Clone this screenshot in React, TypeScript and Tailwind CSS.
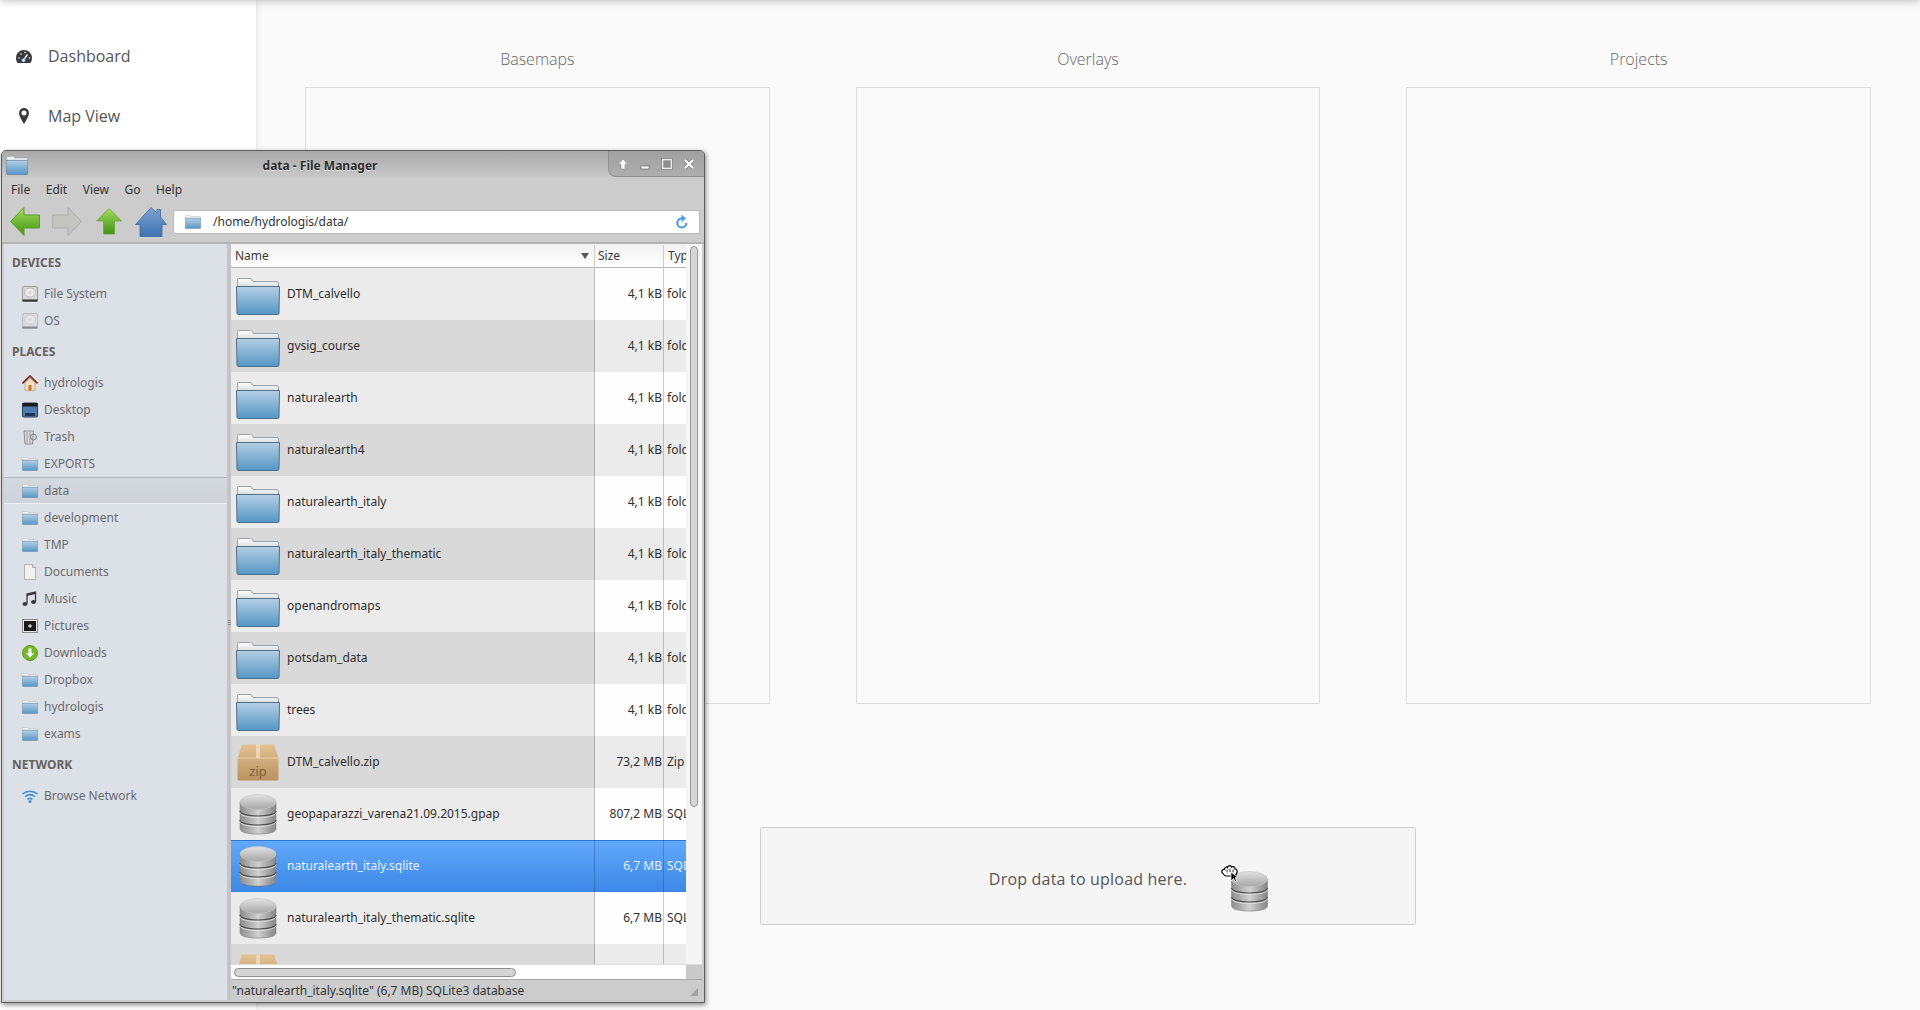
import React from 'react';

const SHARED_DEFS = (
  <svg className="absolute h-0 w-0">
    <defs>
      <linearGradient id="folderBody" x1="0" y1="0" x2="0" y2="1">
        <stop offset="0" stopColor="#b4cfe3" />
        <stop offset="1" stopColor="#5596c6" />
      </linearGradient>
      <linearGradient id="folderTab" x1="0" y1="0" x2="0" y2="1">
        <stop offset="0" stopColor="#ffffff" />
        <stop offset="1" stopColor="#d5d9dd" />
      </linearGradient>
      <linearGradient id="dbSide" x1="0" y1="0" x2="1" y2="0">
        <stop offset="0" stopColor="#8c8c8c" />
        <stop offset="0.5" stopColor="#d0d0d0" />
        <stop offset="1" stopColor="#858585" />
      </linearGradient>
      <linearGradient id="dbTop" x1="0" y1="0" x2="0" y2="1">
        <stop offset="0" stopColor="#e2e2e2" />
        <stop offset="1" stopColor="#a6a6a6" />
      </linearGradient>
      <linearGradient id="zipBody" x1="0" y1="0" x2="0" y2="1">
        <stop offset="0" stopColor="#e2c193" />
        <stop offset="1" stopColor="#b8925f" />
      </linearGradient>
      <linearGradient id="greenArrow" x1="0" y1="0" x2="0" y2="1">
        <stop offset="0" stopColor="#a5dc5e" />
        <stop offset="1" stopColor="#3f9410" />
      </linearGradient>
      <linearGradient id="homeBlue" x1="0" y1="0" x2="0" y2="1">
        <stop offset="0" stopColor="#7ba3d3" />
        <stop offset="1" stopColor="#3f72b1" />
      </linearGradient>
    </defs>
  </svg>
);

const FolderIcon = ({ className }: { className: string }) => (
  <svg viewBox="0 0 44 37" className={className}>
    <path d="M1.500 9V1.500q0-1 1-1h12q1 0 1.500 1l1 2h24q1.500 0 1.500 1.500V10z" fill="url(#folderTab)" stroke="#9aa3aa" strokeWidth="1" />
    <path d="M0.500 8.500h43L43 35q0 1.500-1.500 1.500h-39Q1 36.500 1 35z" fill="url(#folderBody)" stroke="#4f6f88" strokeWidth="1" />
  </svg>
);

const DatabaseIcon = ({ className }: { className: string }) => (
  <svg viewBox="0 0 38 41" className={className}>
    <ellipse cx="19" cy="37" rx="17" ry="3.500" fill="#000" opacity="0.15" />
    <path d="M1 8v27c0 3 8 5 18 5s18-2 18-5V8z" fill="url(#dbSide)" stroke="#888" strokeWidth="0.6" />
    <path d="M1 17c0 3 8 5 18 5s18-2 18-5M1 26c0 3 8 5 18 5s18-2 18-5" fill="none" stroke="#4d4d4d" strokeWidth="1.200" />
    <path d="M1 18.500c0 3 8 5 18 5s18-2 18-5M1 27.500c0 3 8 5 18 5s18-2 18-5" fill="none" stroke="#e6e6e6" strokeWidth="0.8" />
    <ellipse cx="19" cy="8" rx="18" ry="7.500" fill="url(#dbTop)" stroke="#c4c4c4" strokeWidth="0.6" />
  </svg>
);

const ZipIcon = ({ className, showLabel = true }: { className: string; showLabel?: boolean }) => (
  <svg viewBox="0 0 42 37" className={className}>
    <path d="M0.500 14L5 0.500h32L41.500 14v21q0 1.500-1.500 1.500H2q-1.500 0-1.500-1.500z" fill="url(#zipBody)" />
    <path d="M0.500 14h41" stroke="#efdcbd" strokeWidth="0.8" />
    <path d="M19 0.500h4V14h-4z" fill="#f1e2c9" opacity="0.7" />
    {showLabel && (
      <text x="21" y="32" textAnchor="middle" fontSize="13" fill="#7e6240" fontFamily="Noto Sans, sans-serif">zip</text>
    )}
  </svg>
);

const DiskIcon = ({ dim }: { dim?: boolean }) => (
  <svg viewBox="0 0 16 16" className={`h-4 w-4 ${dim ? 'opacity-50' : ''}`}>
    <rect x="0.500" y="0.500" width="15" height="15" rx="1.500" fill="#d8d8d8" stroke="#9a9a9a" />
    <ellipse cx="8" cy="6.500" rx="5.500" ry="4.500" fill="#ececec" stroke="#a8a8a8" strokeWidth="0.7" />
    <circle cx="8" cy="6.500" r="1.500" fill="#d2d2d2" />
    <rect x="0.500" y="13.500" width="15" height="2" fill="#333" />
  </svg>
);

const HouseIcon = () => (
  <svg viewBox="0 0 16 16" className="h-4 w-4">
    <path d="M3 8v7.500h10V8L8 3z" fill="#f3dfc4" stroke="#b08d64" strokeWidth="0.6" />
    <path d="M0.500 8.500L8 1l7.500 7.500" fill="none" stroke="#7a1f1a" strokeWidth="1.600" />
    <rect x="6.500" y="10" width="3" height="5.500" fill="#c5742b" />
  </svg>
);

const DesktopIcon = () => (
  <svg viewBox="0 0 16 16" className="h-4 w-4">
    <rect x="0.500" y="1" width="15" height="14" rx="1" fill="#4f7cab" stroke="#28405c" />
    <rect x="0.500" y="1" width="15" height="3.500" fill="#1b1b1b" />
    <rect x="3" y="11" width="10" height="3" fill="#1f3650" />
  </svg>
);

const TrashIcon = () => (
  <svg viewBox="0 0 16 16" className="h-4 w-4">
    <path d="M2 2l1 13h7.500l1-13z" fill="#d9dde1" stroke="#777" strokeWidth="0.8" />
    <path d="M5 3v11M8 3v11" stroke="#888" strokeWidth="0.8" />
    <circle cx="11.500" cy="8" r="3" fill="none" stroke="#777" strokeWidth="0.9" />
  </svg>
);

const DocumentIcon = () => (
  <svg viewBox="0 0 16 16" className="h-4 w-4">
    <path d="M2.500 0.500h8l3 3v12h-11z" fill="#f1f1f1" stroke="#a5a5a5" strokeWidth="0.8" />
    <path d="M10.500 0.500v3h3" fill="#d8d8d8" stroke="#a5a5a5" strokeWidth="0.8" />
  </svg>
);

const MusicIcon = () => (
  <svg viewBox="0 0 16 16" className="h-4 w-4">
    <path d="M5 12.500V3l8.500-2v9.500" fill="none" stroke="#3a3a3a" strokeWidth="1.300" />
    <path d="M5 3l8.500-2v2L5 5z" fill="#3a3a3a" />
    <ellipse cx="3" cy="13" rx="2.500" ry="2" fill="#3a3a3a" />
    <ellipse cx="11.500" cy="11" rx="2.500" ry="2" fill="#3a3a3a" />
  </svg>
);

const PicturesIcon = () => (
  <svg viewBox="0 0 16 16" className="h-4 w-4">
    <rect x="0.500" y="1.500" width="15" height="13" fill="#e8e8e8" stroke="#8c8c8c" />
    <rect x="2" y="3" width="12" height="10" fill="#1a1a1a" />
    <circle cx="8" cy="8" r="1.800" fill="#c9c9c9" />
  </svg>
);

const DownloadIcon = () => (
  <svg viewBox="0 0 16 16" className="h-4 w-4">
    <circle cx="8" cy="8" r="7.500" fill="#76b82a" stroke="#5c9a1c" />
    <path d="M6.500 3.500h3V8H12l-4 4.500L4 8h2.500z" fill="#fff" />
  </svg>
);

const WifiIcon = () => (
  <svg viewBox="0 0 16 16" className="h-4 w-4">
    <path d="M0.500 6c4.200-3.800 10.800-3.800 15 0M3 8.800c3-2.600 7-2.600 10 0M5.500 11.300c1.600-1.200 3.400-1.200 5 0" fill="none" stroke="#3f8fd0" strokeWidth="1.500" />
    <circle cx="8" cy="13.500" r="1.500" fill="#3f8fd0" />
  </svg>
);

const SmallFolder = () => <FolderIcon className="h-[14px] w-4" />;

const deviceRows = [
  { label: 'File System', icon: <DiskIcon /> },
  { label: 'OS', icon: <DiskIcon dim /> },
];

const placeRows = [
  { label: 'hydrologis', icon: <HouseIcon /> },
  { label: 'Desktop', icon: <DesktopIcon /> },
  { label: 'Trash', icon: <TrashIcon /> },
  { label: 'EXPORTS', icon: <SmallFolder /> },
  { label: 'data', icon: <SmallFolder />, active: true },
  { label: 'development', icon: <SmallFolder /> },
  { label: 'TMP', icon: <SmallFolder /> },
  { label: 'Documents', icon: <DocumentIcon /> },
  { label: 'Music', icon: <MusicIcon /> },
  { label: 'Pictures', icon: <PicturesIcon /> },
  { label: 'Downloads', icon: <DownloadIcon /> },
  { label: 'Dropbox', icon: <SmallFolder /> },
  { label: 'hydrologis', icon: <SmallFolder /> },
  { label: 'exams', icon: <SmallFolder /> },
];

type FileKind = 'folder' | 'zip' | 'db';

const files: { name: string; size: string; type: string; kind: FileKind; selected?: boolean }[] = [
  { name: 'DTM_calvello', size: '4,1 kB', type: 'folder', kind: 'folder' },
  { name: 'gvsig_course', size: '4,1 kB', type: 'folder', kind: 'folder' },
  { name: 'naturalearth', size: '4,1 kB', type: 'folder', kind: 'folder' },
  { name: 'naturalearth4', size: '4,1 kB', type: 'folder', kind: 'folder' },
  { name: 'naturalearth_italy', size: '4,1 kB', type: 'folder', kind: 'folder' },
  { name: 'naturalearth_italy_thematic', size: '4,1 kB', type: 'folder', kind: 'folder' },
  { name: 'openandromaps', size: '4,1 kB', type: 'folder', kind: 'folder' },
  { name: 'potsdam_data', size: '4,1 kB', type: 'folder', kind: 'folder' },
  { name: 'trees', size: '4,1 kB', type: 'folder', kind: 'folder' },
  { name: 'DTM_calvello.zip', size: '73,2 MB', type: 'Zip archive', kind: 'zip' },
  { name: 'geopaparazzi_varena21.09.2015.gpap', size: '807,2 MB', type: 'SQLite3', kind: 'db' },
  { name: 'naturalearth_italy.sqlite', size: '6,7 MB', type: 'SQLite3', kind: 'db', selected: true },
  { name: 'naturalearth_italy_thematic.sqlite', size: '6,7 MB', type: 'SQLite3', kind: 'db' },
];

const SectionTitle = ({ children }: { children: string }) => (
  <div className="mt-[6px] mb-[5px] flex h-6 items-center pl-[8px] text-xs font-bold text-[#66625f]">{children}</div>
);

const PlaceRow = ({ label, icon, active }: { label: string; icon: React.ReactNode; active?: boolean }) => (
  <div
    className={`flex h-[27px] items-center gap-[6px] pl-[18px] text-xs text-[#6b6b70] ${
      active ? 'border-t border-b border-t-[#b3b6ba] border-b-[#eceef1] bg-gradient-to-b from-[#d4d8df] to-[#cfd3da]' : ''
    }`}
  >
    <span className="flex h-4 w-4 shrink-0 items-center justify-center">{icon}</span>
    <span>{label}</span>
  </div>
);

const FileRow = ({ file, index }: { file: (typeof files)[number]; index: number }) => {
  const odd = index % 2 === 1;
  const nameBg = file.selected ? '' : odd ? 'bg-[#d9d9d9]' : 'bg-[#ebebeb]';
  const otherBg = file.selected ? '' : odd ? 'bg-[#ebebeb]' : 'bg-[#fefefe]';
  return (
    <div
      className={`flex h-[52px] shrink-0 text-xs ${
        file.selected ? 'bg-gradient-to-b from-[#62a9fc] to-[#3c88e5] text-[#e3effd] shadow-[inset_0_1px_0_#2c78d6]' : 'text-[#2e2e2e]'
      }`}
    >
      <div className={`flex w-[364px] shrink-0 items-center gap-[7px] border-r border-[#00000033] pl-[4px] ${nameBg}`}>
        <span className="flex h-[42px] w-[45px] shrink-0 items-center justify-center">
          {file.kind === 'folder' && <FolderIcon className="mt-[4px] h-[37px] w-[44px]" />}
          {file.kind === 'zip' && <ZipIcon className="h-[37px] w-[42px]" />}
          {file.kind === 'db' && <DatabaseIcon className="h-[41px] w-[38px]" />}
        </span>
        <span>{file.name}</span>
      </div>
      <div className={`flex w-[69px] shrink-0 items-center justify-end border-r border-[#00000033] pr-[1px] ${otherBg}`}>
        {file.size}
      </div>
      <div className={`flex min-w-0 flex-1 items-center overflow-hidden whitespace-nowrap pl-[3px] ${otherBg}`}>{file.type}</div>
    </div>
  );
};

const WindowControls = () => (
  <div className="ml-auto flex h-[26px] w-[96px] items-center gap-[10px] rounded-bl-[8px] border-b border-l border-[#8f8f8f] bg-gradient-to-b from-[#a0a0a0] to-[#aeaeae] pl-[8px]">
    <svg viewBox="0 0 12 12" className="h-3 w-3">
      <path d="M6 1L11 6.500H8V11H4V6.500H1z" fill="#fff" stroke="#777" strokeWidth="0.5" />
    </svg>
    <svg viewBox="0 0 12 12" className="h-3 w-3">
      <rect x="2" y="8" width="8" height="3" fill="#f4f4f4" stroke="#666" strokeWidth="0.6" />
    </svg>
    <svg viewBox="0 0 12 12" className="h-3 w-3">
      <rect x="1.500" y="1.500" width="9" height="9" fill="#8f8f8f" stroke="#eeeeee" strokeWidth="1.600" />
      <rect x="0.500" y="0.500" width="11" height="11" fill="none" stroke="#666" strokeWidth="0.5" />
    </svg>
    <svg viewBox="0 0 12 12" className="h-3 w-3">
      <path d="M2 2l8 8M10 2l-8 8" stroke="#777" strokeWidth="3.200" />
      <path d="M2 2l8 8M10 2l-8 8" stroke="#fff" strokeWidth="2.200" />
    </svg>
  </div>
);

const NavButtons = () => (
  <div className="flex items-center">
    <svg viewBox="0 0 30 29" className="ml-[8px] h-[29px] w-[30px]">
      <path d="M0.500 14.500L14 0.500v7.500h15.500v13H14v7.500z" fill="url(#greenArrow)" stroke="#5f9a2e" />
    </svg>
    <svg viewBox="0 0 30 29" className="ml-[12px] h-[29px] w-[30px]">
      <path d="M29.500 14.500L16 0.500v7.500H0.500v13H16v7.500z" fill="#c4c5c0" stroke="#acada8" />
    </svg>
    <svg viewBox="0 0 26 28" className="ml-[14px] h-[28px] w-[26px]">
      <path d="M13 0.500L25.500 13H18.500v13h-11V13H0.500z" fill="url(#greenArrow)" stroke="#6aa53a" strokeWidth="0.8" />
    </svg>
    <svg viewBox="0 0 32 30" className="ml-[13px] h-[30px] w-[32px]">
      <path d="M16 0.500L22 6V2.500h3.500V10l6 7.500H27V29.500H5V17.500H0.500z" fill="url(#homeBlue)" stroke="#3d6aa2" strokeWidth="0.8" />
    </svg>
  </div>
);

const FileManager = () => (
  <div className="absolute left-[1px] top-[150px] flex h-[853px] w-[704px] flex-col overflow-hidden rounded-t-[5px] border border-[#5d5d5d] bg-[#cccccc] font-['Noto_Sans',sans-serif] shadow-[1px_2px_5px_rgba(0,0,0,0.45)]">
    <div className="relative flex h-[26px] shrink-0 items-start bg-gradient-to-b from-[#a8a8a8] to-[#c8c8c8]">
      <FolderIcon className="absolute left-[4px] top-[5px] h-[19px] w-[22px]" />
      <span className="absolute left-0 right-[66px] top-[7px] text-center text-xs font-bold text-[#2f2f2f] [text-shadow:0_1px_0_#e4e4e4]">
        data - File Manager
      </span>
      <WindowControls />
    </div>

    <div className="flex h-[26px] shrink-0 items-center gap-[15.500px] pl-[9px] text-xs text-[#333]">
      <span>File</span>
      <span>Edit</span>
      <span>View</span>
      <span>Go</span>
      <span>Help</span>
    </div>

    <div className="flex h-[39px] shrink-0 items-center pb-[2px]">
      <NavButtons />
      <div className="ml-[6px] mr-[4px] flex h-[24px] flex-1 items-center rounded-[2px] border border-[#b9b9b9] bg-white pl-[11px] pr-[10px] text-xs text-[#333]">
        <SmallFolder />
        <span className="ml-[12px]">/home/hydrologis/data/</span>
        <svg viewBox="0 0 16 18" className="ml-auto h-[18px] w-[14px]">
          <path d="M13 10a5.200 5.200 0 1 1-5.200-5.200" fill="none" stroke="#4a9ae0" strokeWidth="2.400" />
          <path d="M7.500 0.500L12.500 5 7.500 9z" fill="#4a9ae0" />
        </svg>
      </div>
    </div>

    <div className="flex min-h-0 flex-1 border-t-2 border-[#b4b4b4] px-[2px] pb-[2px]">
      <div className="w-[223px] shrink-0 bg-[#dce0e7] pt-[1px]">
        <SectionTitle>DEVICES</SectionTitle>
        {deviceRows.map((row) => (
          <PlaceRow key={row.label} label={row.label} icon={row.icon} />
        ))}
        <SectionTitle>PLACES</SectionTitle>
        {placeRows.map((row, i) => (
          <PlaceRow key={`${row.label}-${i}`} label={row.label} icon={row.icon} active={row.active} />
        ))}
        <SectionTitle>NETWORK</SectionTitle>
        <PlaceRow label="Browse Network" icon={<WifiIcon />} />
      </div>

      <div className="flex w-[4px] shrink-0 flex-col items-center justify-center gap-[1px] bg-[#c4c4c4]">
        <div className="h-px w-[3px] bg-[#8f8f8f]" />
        <div className="h-px w-[3px] bg-[#8f8f8f]" />
        <div className="h-px w-[3px] bg-[#8f8f8f]" />
      </div>

      <div className="flex min-w-0 flex-1 flex-col">
        <div className="flex h-[720px] shrink-0">
          <div className="flex w-[455px] shrink-0 flex-col overflow-hidden">
            <div className="flex h-6 shrink-0 border-b border-[#b5b5b5] bg-gradient-to-b from-[#f1f1f1] to-white pt-[1px] text-xs text-[#3a3a3a]">
              <div className="flex w-[364px] shrink-0 items-center justify-between border-r border-[#cccccc] pl-[4px] pr-[5px]">
                <span>Name</span>
                <svg viewBox="0 0 8 6" className="h-[6px] w-2">
                  <path d="M0 0h8L4 6z" fill="#555" />
                </svg>
              </div>
              <div className="flex w-[69px] shrink-0 items-center border-r border-[#cccccc] pl-[3px]">Size</div>
              <div className="flex min-w-0 flex-1 items-center overflow-hidden pl-[4px]">Type</div>
            </div>
            {files.map((file, i) => (
              <FileRow key={file.name} file={file} index={i} />
            ))}
            <div className="flex h-[20px] shrink-0 overflow-hidden">
              <div className="flex w-[364px] shrink-0 items-start border-r border-[#00000033] bg-[#d9d9d9] pl-[6px] pt-[10px]">
                <ZipIcon className="h-[37px] w-[42px] shrink-0" showLabel={false} />
              </div>
              <div className="w-[69px] shrink-0 border-r border-[#00000033] bg-[#ebebeb]" />
              <div className="flex-1 bg-[#ebebeb]" />
            </div>
          </div>
          <div className="flex w-[16px] shrink-0 justify-center bg-[#f5f5f5] pt-[2px]">
            <div className="h-[561px] w-[8px] rounded-[4px] border border-[#9a9a9a] bg-[#d6d6d6]" />
          </div>
        </div>
        <div className="flex h-[15px] shrink-0 border-t border-[#dcdcdc]">
          <div className="flex w-[455px] shrink-0 items-center bg-white pl-[3px]">
            <div className="h-[9px] w-[282px] rounded-[5px] border border-[#8e8e8e] bg-[#d4d4d4]" />
          </div>
          <div className="flex-1 bg-[#c9c9c9]" />
        </div>
        <div className="relative flex min-h-0 flex-1 items-center border-t border-[#a9a9a9] pl-[1px] pt-[1px] text-xs text-[#333]">
          <span>"naturalearth_italy.sqlite" (6,7 MB) SQLite3 database</span>
          <svg viewBox="0 0 8 8" className="absolute bottom-[4px] right-[4px] h-2 w-2">
            <path d="M8 0v8H0z" fill="#a2a2a2" />
          </svg>
        </div>
      </div>
    </div>
  </div>
);

const UploadBox = () => (
  <div className="relative mx-auto mt-[123px] flex h-[98px] w-[656px] items-center justify-center rounded-[3px] border border-[#cccccc] bg-[#f5f5f5] pt-[6px] text-base tracking-[0.2px] text-[#555]">
    Drop data to upload here.
    <DatabaseIcon className="absolute left-[469px] top-[43px] h-[41px] w-[39px]" />
    {/* drag cursor hand */}
    <svg viewBox="0 0 18 18" className="absolute left-[460px] top-[36px] h-[18px] w-[18px]">
      <path d="M1.500 9C0 7 1.500 5 3.500 5.500 3.500 3 6 2.500 6.500 3.500 7 1 10 1 10.500 3c1.500-1 3.500 0 3.500 2 1.500 0 2.500 1.500 2 3.500-.5 2-2 3.500-3.500 3.500H5C3.500 12 2.500 10.500 1.500 9z" fill="#fff" stroke="#000" strokeWidth="1.200" />
      <path d="M6 5.500v3M9 4.500v3.500M12 5.500v3" stroke="#000" strokeWidth="0.8" />
      <path d="M10 8v9l2.500-2.500 1.500 3 1.500-.8-1.500-3H17z" fill="#000" stroke="#fff" strokeWidth="0.7" />
    </svg>
  </div>
);

const App: React.FC = () => {
  const panels = ['Basemaps', 'Overlays', 'Projects'];

  return (
    <div className="relative flex h-[1010px] w-[1920px] overflow-hidden bg-[#fafafa] font-['Open_Sans',sans-serif]">
      {SHARED_DEFS}
      <aside className="w-[256px] shrink-0 bg-white pt-[26px] shadow-[0_0_6px_rgba(0,0,0,0.12)]">
        <div className="flex h-[60px] items-center text-base text-[#555]">
          <svg viewBox="0 0 16 13" className="ml-[16px] mr-[16px] h-[13px] w-4 text-[#3a3a3a]">
            <path d="M8 0a8 8 0 0 0-8 8c0 1.800.6 3.600 1.600 5h12.800A8 8 0 0 0 16 8a8 8 0 0 0-8-8z" fill="currentColor" />
            <path d="M7.500 10L11.500 4.500" stroke="#fff" strokeWidth="1.300" />
            <circle cx="7.500" cy="10.300" r="1.700" fill="#fff" stroke="#4a90c8" strokeWidth="0.8" />
            <circle cx="3" cy="8" r="0.800" fill="#fff" />
            <circle cx="5" cy="4" r="0.800" fill="#fff" />
            <circle cx="9" cy="2.500" r="0.800" fill="#fff" />
            <circle cx="13.500" cy="8" r="0.800" fill="#fff" />
          </svg>
          Dashboard
        </div>
        <div className="flex h-[60px] items-center text-base text-[#555]">
          <svg viewBox="0 0 10 16" className="ml-[19px] mr-[19px] h-4 w-[10px] text-[#3a3a3a]">
            <path fillRule="evenodd" d="M5 0a5 5 0 0 0-5 5c0 3.500 5 11 5 11s5-7.500 5-11a5 5 0 0 0-5-5zm0 2.500a2.500 2.500 0 1 1 0 5 2.500 2.500 0 0 1 0-5z" fill="currentColor" />
          </svg>
          Map View
        </div>
      </aside>

      <main className="min-w-0 flex-1 px-[49px] pt-[47px]">
        <div className="grid grid-cols-3 gap-[86px]">
          {panels.map((panel) => (
            <div key={panel}>
              <h2 className="mb-[16px] h-6 text-center text-base font-light leading-6 text-[#666]">{panel}</h2>
              <div className="h-[617px] border border-[#dddddd]" />
            </div>
          ))}
        </div>
        <UploadBox />
      </main>

      <div className="pointer-events-none absolute left-0 right-0 top-[-6px] h-[6px] shadow-[0_0_8px_rgba(0,0,0,0.35)]" />

      <FileManager />
    </div>
  );
};

export default App;
